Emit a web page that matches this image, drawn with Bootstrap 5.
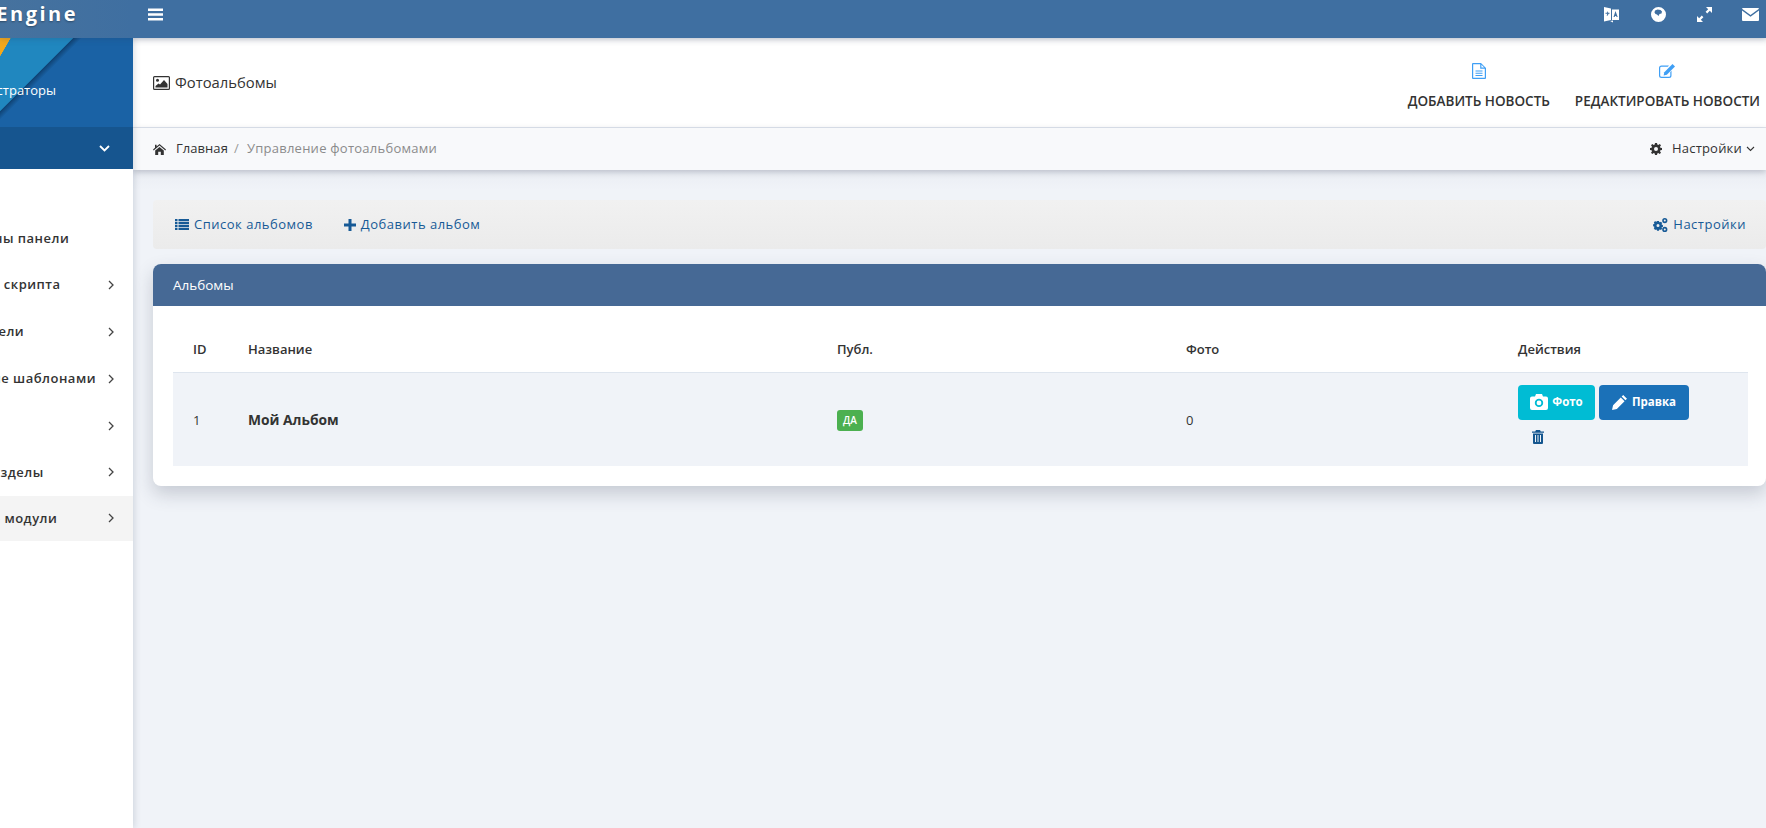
<!DOCTYPE html>
<html lang="ru">
<head>
<meta charset="utf-8">
<title>Фотоальбомы</title>
<link rel="stylesheet" href="https://cdn.jsdelivr.net/npm/bootstrap@5.3.0/dist/css/bootstrap.min.css">
<style>
html,body{height:100%;overflow:hidden}
body{font-family:"Open Sans","Noto Sans",sans-serif;font-size:13px;color:#333;background:#f0f3f8}
.ico{display:inline-block;fill:currentColor;flex:none}
.shell{height:828px;display:flex;flex-direction:column}
.topbar{height:38px;padding:0 0 10px;background:#3f6fa1;flex:none;flex-wrap:nowrap;position:relative;z-index:3;box-shadow:0 1px 6px rgba(40,60,90,.25)}
.brandbox{width:133px;height:38px;margin-bottom:-10px;padding-bottom:10px;overflow:hidden;display:flex;justify-content:flex-end;align-items:center;background:linear-gradient(90deg,#46729e,#3f6fa1);flex:none}
.brandtxt{white-space:nowrap;color:#fff;font-size:20px;font-weight:700;letter-spacing:2.5px;padding-right:55px;text-shadow:0 1px 2px rgba(0,0,0,.35);line-height:28px}
.burger{color:#fff;margin-left:15px}
.topicons{margin-left:auto;margin-right:-8px;display:flex;align-items:center;color:#fff}
.topicons span{width:46.3px;display:flex;justify-content:center}
.workarea{flex:1;display:flex;min-height:0}
.sidepane{width:133px;flex:none;background:#fff;position:relative;z-index:2;box-shadow:2px 0 6px rgba(60,80,110,.16);overflow:hidden}
.sidebanner{height:89px;display:flex;justify-content:flex-end;overflow:hidden;background:
 linear-gradient(120deg,#f4a81b 0 9px,transparent 9.5px),
 linear-gradient(135deg,#2087bf 0 51.5px,#0e4273 52px,#1a62a5 58px);}
.sidebanner div{white-space:nowrap;color:#fff;padding:42px 77px 0 0;line-height:20px;font-size:13px}
.sidedrop{height:42px;background:#16558f;color:#fff;display:flex;justify-content:flex-end;align-items:center;padding-right:23px}
.sidemenu{margin-top:46px;border-radius:0}
.sidemenu .list-group-item{height:46.8px;border:0;padding:0 19px 0 0;display:flex;align-items:center;overflow:hidden;white-space:nowrap;font-weight:600;color:#333;font-size:13px;letter-spacing:.5px;background:transparent}
.sidemenu .list-group-item.on{background:#f4f4f4;height:45px}
.menutext{margin-left:-76px;flex:none}
.chev{color:#444;margin-left:auto}
.mainpane{flex:1;min-width:0;display:flex;flex-direction:column}
.pagehead{height:90px;background:#fff;border-bottom:1px solid #e0e5ee;display:flex;align-items:center;padding:0 6px 0 20px;flex:none;box-shadow:inset 0 8px 8px -8px rgba(60,70,90,.18)}
.pagetitle{font-size:14.8px;color:#333;display:flex;align-items:center;gap:5px}
.headlinks{margin-left:auto;display:flex;gap:25px}
.headlinks a{display:flex;flex-direction:column;align-items:center;gap:12px;color:#333;text-decoration:none;font-weight:600;font-size:13.5px;white-space:nowrap;padding-top:10px}
.headlinks svg{color:#3f9ff5}
.crumbbar{height:42px;background:#f8f9fb;display:flex;align-items:center;padding:0 11px 0 20px;flex:none;box-shadow:0 2px 6px rgba(60,70,90,.28);position:relative}
.crumbbar .breadcrumb{margin:0;font-size:13px;align-items:center}
.crumbbar .breadcrumb-item{color:#8b8b8b;letter-spacing:.25px}
.crumbbar .breadcrumb-item a{color:#333;text-decoration:none;display:flex;align-items:center;gap:10px;letter-spacing:.05px}
.crumbbar .breadcrumb-item+.breadcrumb-item{padding-left:6px}
.crumbbar .breadcrumb-item+.breadcrumb-item::before{padding-right:8px;color:#999}
.setlink{margin-left:auto;display:flex;align-items:center;color:#333;gap:10px;letter-spacing:.2px}
.setlink i{font-style:normal;display:flex;align-items:center;gap:4px}
.contentarea{padding:30px 0 0 20px;background:linear-gradient(#eaedf3,#f0f3f8 20px)}
.toolstrip{height:49px;background:linear-gradient(#f1f1f1,#ebebeb);border-radius:4px;display:flex;align-items:center;padding:0 20px 0 22px;margin-bottom:15px;color:#175a96;letter-spacing:.5px}
.toolstrip a{color:#175a96;text-decoration:none;display:flex;align-items:center;gap:5px}
.toolstrip .second{margin-left:31px}
.toolstrip .third{margin-left:auto}
.albumcard{border:0;border-radius:8px;box-shadow:0 8px 18px rgba(50,60,80,.22);overflow:hidden}
.albumcard .card-header{height:42px;background:#466995;color:#fff;border:0;border-radius:0;padding:0 20px;display:flex;align-items:center;font-size:13.5px}
.albumcard .card-body{padding:20px 18px 20px 20px}
.albumtable{table-layout:fixed;width:100%;margin:0;font-size:13px;color:#333;--bs-table-bg:transparent}
.albumtable th{height:46px;font-weight:600;padding:2px 0 0 20px;vertical-align:middle;border-bottom:1px solid #dee5ee;color:#333;box-shadow:none}
.albumtable td{background:#f0f3f8;height:94px;padding:2px 0 0 20px;vertical-align:middle;border:0;box-shadow:none;color:#333}
.albumtable td.actioncell{vertical-align:top;padding-top:12px}
.colid{width:55px}.colname{width:589px}.colpub{width:349px}.colfoto{width:332px}
.albumtable td.albumname{font-weight:700;font-size:13.8px}
.yesbadge{background:#4cb050;font-size:10px;font-weight:600;padding:0;width:26px;height:21px;line-height:21px;border-radius:3px;color:#fff;display:inline-block;text-align:center}
.actbtn{border:0;font-size:11.5px;font-weight:700;color:#fff;height:35px;border-radius:4px;padding:0;display:inline-flex;align-items:center;justify-content:center;gap:4px}
.actfoto{width:77px;background:#00bcd4}
.actedit{width:90px;background:#1b71b8;gap:5px}
.acttrash{display:block;color:#15568f;margin:10px 0 0 14px}
</style>
</head>
<body>
<div class="shell">
 <nav class="navbar topbar">
  <div class="brandbox"><span class="brandtxt">DataLife Engine</span></div>
  <svg class="ico burger" width="15" height="13" viewBox="0 0 15 13"><path d="M0 0.5h15v2.600H0zM0 5.200h15v2.600H0zM0 9.900h15v2.600H0z"/></svg>
  <div class="topicons">
   <span><svg class="ico" width="15" height="17" viewBox="0 0 15 17"><path d="M0 1 7 2.500V14L0 15.500z"/><path fill-rule="evenodd" d="M8 3.500h7V14H8zM11.500 5l-2 6h1.200l.3-1.100h1.200l.3 1.100h1.200z"/><path d="M3.500 5l.7 1.800h1.300v1H4.600l-1 2-1-.4.800-1.600H1.500v-1h1.600z" fill="#3f6fa1"/><path d="M6 15l3 1.500V14.500z"/></svg></span>
   <span><svg class="ico" width="15" height="15" viewBox="0 0 15 15"><path fill-rule="evenodd" d="M7.500 0a7.500 7.500 0 1 0 0 15 7.500 7.500 0 0 0 0-15zM4 3.500l2.500-1 3 .5 1.500 1.500-.5 2-2 .5-1 2-1.500-1.500-1.500-.5-1-1.500z"/></svg></span>
   <span><svg class="ico" width="15" height="15" viewBox="0 0 15 15"><path d="M9 0h6v6l-2.200-2.200-2.600 2.600-1.600-1.600 2.600-2.600zM6 15H0V9l2.200 2.200 2.600-2.600 1.600 1.600-2.600 2.600z"/></svg></span>
   <span><svg class="ico" width="17" height="13" viewBox="0 0 17 13"><path d="M1 0h15a1 1 0 0 1 1 .8L8.500 7 0 .8A1 1 0 0 1 1 0zM0 2.500V12a1 1 0 0 0 1 1h15a1 1 0 0 0 1-1V2.500L8.500 8.700z"/></svg></span>
  </div>
 </nav>
 <div class="workarea">
  <aside class="sidepane">
   <div class="sidebanner"><div>Администраторы</div></div>
   <div class="sidedrop"><svg class="ico" width="11" height="7" viewBox="0 0 11 7"><path d="M1 1l4.500 4.500L10 1" fill="none" stroke="currentColor" stroke-width="1.800"/></svg></div>
   <div class="list-group sidemenu">
    <a class="list-group-item"><span class="menutext">Все колонны панели</span></a>
    <a class="list-group-item"><span class="menutext">Настройки скрипта</span><svg class="ico chev" width="6" height="10" viewBox="0 0 6 10"><path d="M1 1l4 4-4 4" fill="none" stroke="currentColor" stroke-width="1.300"/></svg></a>
    <a class="list-group-item"><span class="menutext">Пользователи</span><svg class="ico chev" width="6" height="10" viewBox="0 0 6 10"><path d="M1 1l4 4-4 4" fill="none" stroke="currentColor" stroke-width="1.300"/></svg></a>
    <a class="list-group-item"><span class="menutext">Управление шаблонами</span><svg class="ico chev" width="6" height="10" viewBox="0 0 6 10"><path d="M1 1l4 4-4 4" fill="none" stroke="currentColor" stroke-width="1.300"/></svg></a>
    <a class="list-group-item"><svg class="ico chev" width="6" height="10" viewBox="0 0 6 10"><path d="M1 1l4 4-4 4" fill="none" stroke="currentColor" stroke-width="1.300"/></svg></a>
    <a class="list-group-item"><span class="menutext">Важные разделы</span><svg class="ico chev" width="6" height="10" viewBox="0 0 6 10"><path d="M1 1l4 4-4 4" fill="none" stroke="currentColor" stroke-width="1.300"/></svg></a>
    <a class="list-group-item on"><span class="menutext">Сторонние модули</span><svg class="ico chev" width="6" height="10" viewBox="0 0 6 10"><path d="M1 1l4 4-4 4" fill="none" stroke="currentColor" stroke-width="1.300"/></svg></a>
   </div>
  </aside>
  <main class="mainpane">
   <header class="pagehead">
    <div class="pagetitle"><svg class="ico" width="17" height="14" viewBox="0 0 17 14"><path fill-rule="evenodd" d="M1.500 0h14A1.500 1.500 0 0 1 17 1.500v11a1.500 1.500 0 0 1-1.500 1.500h-14A1.500 1.500 0 0 1 0 12.500v-11A1.500 1.500 0 0 1 1.500 0zM1.500 1.200a.3.3 0 0 0-.3.3v11a.3.3 0 0 0 .3.300h14a.3.3 0 0 0 .3-.3v-11a.3.3 0 0 0-.3-.3z"/><circle cx="4.500" cy="4.200" r="1.500"/><path d="M2.500 11.500V10l3-2.500 1.500 1 4-4.500 3.500 4v3.500z"/></svg>Фотоальбомы</div>
    <div class="headlinks">
     <a href="#"><svg class="ico" width="14" height="16" viewBox="0 0 14 16"><path fill-rule="evenodd" d="M1 0h8l5 5v10a1 1 0 0 1-1 1H1a1 1 0 0 1-1-1V1a1 1 0 0 1 1-1zm.2 1.200v13.600h11.600V5.800H8.200V1.200zM9.400 1.800v2.800h2.800z"/><path d="M3.500 7.500h7v1h-7zM3.500 9.700h7v1h-7zM3.500 11.900h7v1h-7z"/></svg>ДОБАВИТЬ НОВОСТЬ</a>
     <a href="#"><svg class="ico" width="16" height="16" viewBox="0 0 16 14"><path d="M2.500 1.500H10L8.800 2.700H2.500A1.300 1.300 0 0 0 1.200 4v7.500a1.300 1.300 0 0 0 1.300 1.300H10a1.300 1.300 0 0 0 1.300-1.300V8l1.200-1.200v4.700A2.500 2.500 0 0 1 10 14H2.500A2.500 2.500 0 0 1 0 11.500V4a2.500 2.500 0 0 1 2.500-2.500z"/><path d="M13.500 0 16 2.500 7.800 10.700 4.600 11.400l.7-3.200z"/></svg>РЕДАКТИРОВАТЬ НОВОСТИ</a>
    </div>
   </header>
   <div class="crumbbar">
    <ol class="breadcrumb">
     <li class="breadcrumb-item"><a href="#"><svg class="ico" width="13" height="11" viewBox="0 0 13 11"><path d="M6.500 0 13 5.600l-.7.800-5.800-5-5.800 5-.7-.8L2 3.800V.8h1.600v1.600zM2.200 6.500 6.500 2.900l4.300 3.600V11H7.800V7.800H5.200V11H2.200z"/></svg>Главная</a></li>
     <li class="breadcrumb-item active">Управление фотоальбомами</li>
    </ol>
    <div class="setlink"><svg class="ico" width="12" height="12" viewBox="0 0 12 12"><path fill-rule="evenodd" d="M5 0h2l.3 1.600 1 .4L9.700 1 11 2.300 10 3.700l.4 1L12 5v2l-1.600.3-.4 1 1 1.400L9.700 11l-1.400-1-1 .4L7 12H5l-.3-1.600-1-.4L2.300 11 1 9.700 2 8.300l-.4-1L0 7V5l1.600-.3.400-1L1 2.300 2.300 1l1.400 1 1-.4zM6 4a2 2 0 1 0 0 4 2 2 0 0 0 0-4z"/></svg><i>Настройки <svg class="ico" width="9" height="6" viewBox="0 0 9 6"><path d="M1 1l3.500 3.500L8 1" fill="none" stroke="currentColor" stroke-width="1.100"/></svg></i></div>
   </div>
   <div class="contentarea">
    <div class="toolstrip">
     <a href="#"><svg class="ico" width="14" height="11" viewBox="0 0 14 11"><path d="M0 0h2.500v2.200H0zM3.500 0H14v2.200H3.500zM0 2.900h2.500v2.200H0zM3.500 2.900H14v2.200H3.500zM0 5.800h2.500V8H0zM3.500 5.800H14V8H3.500zM0 8.700h2.500v2.200H0zM3.500 8.700H14v2.200H3.500z"/></svg>Список альбомов</a>
     <a href="#" class="second"><svg class="ico" width="12" height="12" viewBox="0 0 12 12"><path d="M4.500 0h3v4.500H12v3H7.500V12h-3V7.500H0v-3h4.500z"/></svg>Добавить альбом</a>
     <a href="#" class="third"><svg class="ico" width="15" height="14" viewBox="0 0 15 14"><path fill-rule="evenodd" d="M4 3h2l.2 1 .8.300.9-.6 1.300 1.300-.6.900.3.800 1 .2v2l-1 .2-.3.800.6.900-1.300 1.300-.9-.6-.8.300-.2 1H4l-.2-1-.8-.3-.9.600L.800 10.200l.6-.9-.3-.8-1-.2v-2l1-.2.300-.8-.6-.9L2.100 3.100l.9.600.8-.3zM5 6a1.500 1.500 0 1 0 0 3 1.500 1.500 0 0 0 0-3z"/><path fill-rule="evenodd" d="M11.800 0a2.600 2.600 0 1 0 0 5.200 2.600 2.600 0 0 0 0-5.200zm0 1.600a1 1 0 1 1 0 2 1 1 0 0 1 0-2z"/><path fill-rule="evenodd" d="M11.800 8.800a2.600 2.600 0 1 0 0 5.200 2.600 2.600 0 0 0 0-5.200zm0 1.600a1 1 0 1 1 0 2 1 1 0 0 1 0-2z"/></svg>Настройки</a>
    </div>
    <div class="card albumcard">
     <div class="card-header">Альбомы</div>
     <div class="card-body">
      <table class="table albumtable">
       <colgroup><col class="colid"><col class="colname"><col class="colpub"><col class="colfoto"><col></colgroup>
       <thead><tr><th>ID</th><th>Название</th><th>Публ.</th><th>Фото</th><th>Действия</th></tr></thead>
       <tbody><tr>
        <td>1</td>
        <td class="albumname">Мой Альбом</td>
        <td><span class="badge yesbadge">ДА</span></td>
        <td>0</td>
        <td class="actioncell">
         <div class="d-flex gap-1">
         <button class="btn actbtn actfoto" type="button"><svg class="ico" width="18" height="16" viewBox="0 0 18 16"><path fill-rule="evenodd" d="M6 0h6l1 2.500h3a2 2 0 0 1 2 2V14a2 2 0 0 1-2 2H2a2 2 0 0 1-2-2V4.500a2 2 0 0 1 2-2h3zM9 4.700a4.200 4.200 0 1 0 0 8.400 4.200 4.200 0 0 0 0-8.400zm0 1.800a2.400 2.400 0 1 1 0 4.800 2.400 2.400 0 0 1 0-4.800z"/></svg>Фото</button>
         <button class="btn actbtn actedit" type="button"><svg class="ico" width="15" height="15" viewBox="0 0 14 14"><path d="M10.500 0 14 3.500 12.500 5 9 1.500zM8.200 2.300l3.500 3.500L4.500 13 0 14l1-4.500z"/></svg>Правка</button>
         </div>
         <svg class="ico acttrash" width="12" height="14" viewBox="0 0 12 14"><path fill-rule="evenodd" d="M4 0h4l.8 1.500H12v1.300H0V1.500h3.200zM1 3.500h10V13a1 1 0 0 1-1 1H2a1 1 0 0 1-1-1zM3 5v7h1V5zm2.500 0v7h1V5zM8 5v7h1V5z"/></svg>
        </td>
       </tr></tbody>
      </table>
     </div>
    </div>
   </div>
  </main>
 </div>
</div>
<script src="https://cdn.jsdelivr.net/npm/bootstrap@5.3.0/dist/js/bootstrap.bundle.min.js"></script>
</body>
</html>
